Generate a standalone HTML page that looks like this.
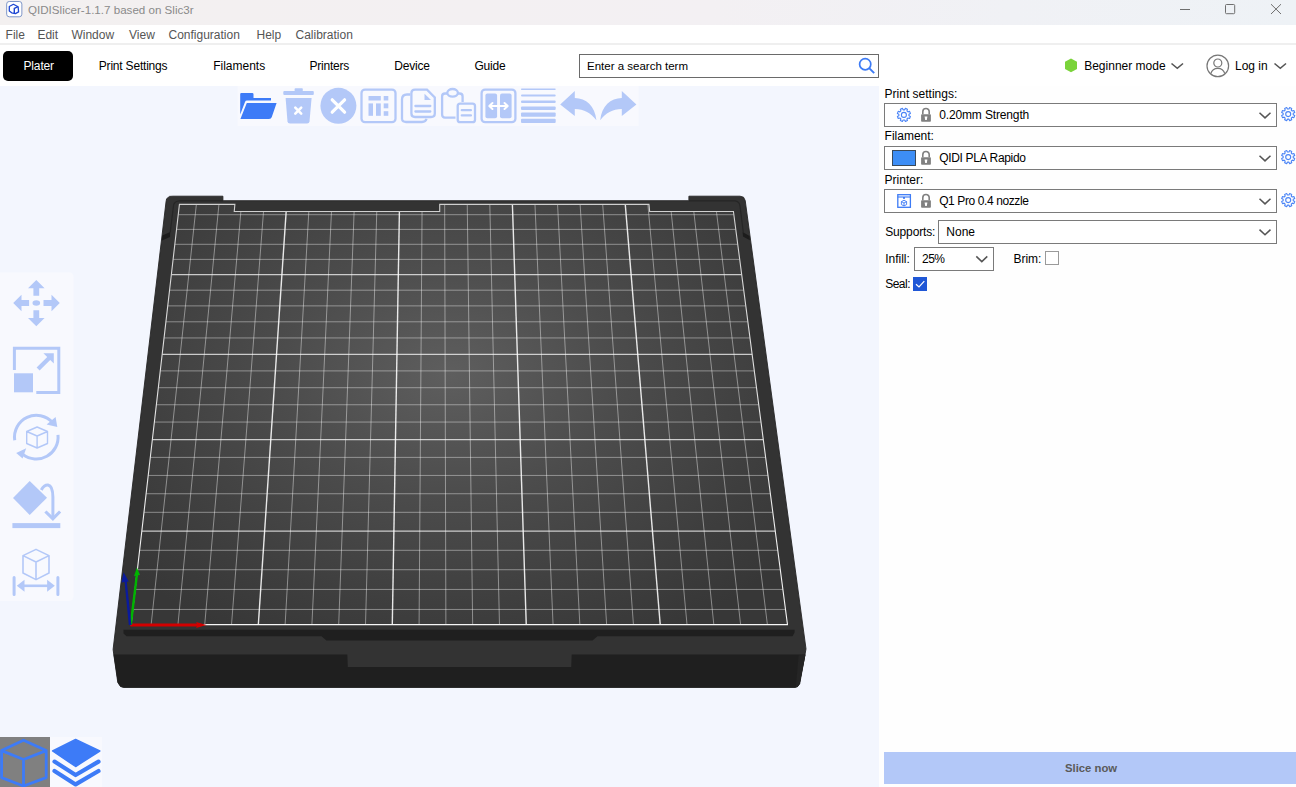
<!DOCTYPE html>
<html><head><meta charset="utf-8"><title>QIDISlicer</title>
<style>
*{box-sizing:border-box}
html,body{margin:0;padding:0}
body{width:1296px;height:787px;overflow:hidden;position:relative;background:#fff;font-family:"Liberation Sans",sans-serif;font-size:12px;color:#000}
.a{position:absolute;white-space:nowrap;line-height:12px}
#title{position:absolute;left:0;top:0;width:1296px;height:25px;background:linear-gradient(90deg,#f3f0f0 0%,#f3f0f3 55%,#f0f1f5 78%,#eef2f6 100%)}
#menu{position:absolute;left:0;top:25px;width:1296px;height:18px;background:#fff}
#sep{position:absolute;left:0;top:43px;width:1296px;height:2px;background:#efefef}
#tabs{position:absolute;left:0;top:45px;width:1296px;height:41px;background:#fff}
#canvas{position:absolute;left:0;top:86px;width:879px;height:701px;background:#f3f6fe;overflow:hidden}
#panel{position:absolute;left:879px;top:86px;width:417px;height:701px;background:#fefefe}
.menu{color:#555}
.combo{position:absolute;border:1px solid #7a7a7a;background:#fff}
.chev{position:absolute}
</style></head>
<body>
<div id="title">
  <svg class="a" style="left:6px;top:1px" width="17" height="17" viewBox="0 0 17 17">
    <rect x="0.66" y="0.5" width="15.2" height="15.3" rx="2.6" fill="#fff" stroke="#7f97c9" stroke-width="1"/>
    <path d="M7.4 3.3 L12.1 5.8 L12.6 10.9 L9.4 12.6 L5.7 11.8 L3.3 9.9 L3.3 5.5 Z" fill="none" stroke="#1d46d2" stroke-width="1.3" stroke-linejoin="round"/>
    <path d="M8.3 12.3 L8.3 7.5 L12 5.6" fill="none" stroke="#1d46d2" stroke-width="1.4"/>
  </svg>
  <div class="a" style="left:28px;top:4px;font-size:11.6px;color:#8a8a8a">QIDISlicer-1.1.7 based on Slic3r</div>
  <svg class="a" style="left:1170px;top:0" width="126" height="25">
    <line x1="10" y1="9.5" x2="20" y2="9.5" stroke="#6e6e6e" stroke-width="1"/>
    <rect x="55.5" y="4.5" width="9.2" height="9.2" rx="1" fill="none" stroke="#6e6e6e" stroke-width="1"/>
    <path d="M101 4.2 L111 14 M111 4.2 L101 14" stroke="#6e6e6e" stroke-width="1"/>
  </svg>
</div>
<div id="menu">
  <div class="a menu" style="left:5.6px;top:3.7px">File</div>
  <div class="a menu" style="left:37.4px;top:3.7px">Edit</div>
  <div class="a menu" style="left:71.4px;top:3.7px">Window</div>
  <div class="a menu" style="left:129px;top:3.7px">View</div>
  <div class="a menu" style="left:168.5px;top:3.7px">Configuration</div>
  <div class="a menu" style="left:256.5px;top:3.7px">Help</div>
  <div class="a menu" style="left:295.5px;top:3.7px">Calibration</div>
</div>
<div id="sep"></div>
<div id="tabs">
  <div style="position:absolute;left:3px;top:6px;width:70px;height:30px;background:#000;border-radius:5px"></div>
  <div class="a" style="left:23.5px;top:15px;font-size:12px;color:#fff;letter-spacing:-0.15px">Plater</div>
  <div class="a" style="left:98.8px;top:15px;font-size:12px;letter-spacing:-0.2px">Print Settings</div>
  <div class="a" style="left:213.2px;top:15px;font-size:12px">Filaments</div>
  <div class="a" style="left:309.4px;top:15px;font-size:12px;letter-spacing:-0.2px">Printers</div>
  <div class="a" style="left:394.3px;top:15px;font-size:12px;letter-spacing:-0.2px">Device</div>
  <div class="a" style="left:474.4px;top:15px;font-size:12px;letter-spacing:-0.2px">Guide</div>
  <div style="position:absolute;left:579px;top:9px;width:300px;height:24px;border:1px solid #6a6a6a;background:#fff"></div>
  <div class="a" style="left:587px;top:15.3px;font-size:11.5px">Enter a search term</div>
  <svg class="a" style="left:858px;top:12px" width="18" height="18" viewBox="0 0 18 18">
    <circle cx="7.2" cy="7.2" r="5.6" fill="none" stroke="#3d7bf5" stroke-width="1.7"/>
    <line x1="11.2" y1="11.2" x2="16.2" y2="16.2" stroke="#3d7bf5" stroke-width="1.9"/>
  </svg>
  <svg class="a" style="left:1064px;top:13px" width="14" height="15" viewBox="0 0 14 15">
    <polygon points="7,0.5 13,3.8 13,11 7,14.3 1,11 1,3.8" fill="#7ad33a"/>
  </svg>
  <div class="a" style="left:1084.2px;top:15px;font-size:12px">Beginner mode</div>
  <svg class="a" style="left:1170px;top:17px" width="15" height="8"><path d="M1.5 1.5 L7.3 6.3 L13 1.5" fill="none" stroke="#555" stroke-width="1.6"/></svg>
  <svg class="a" style="left:1206px;top:9px" width="24" height="24" viewBox="0 0 24 24">
    <circle cx="11.8" cy="11.9" r="10.8" fill="none" stroke="#777" stroke-width="1.2"/>
    <circle cx="11.8" cy="9" r="4" fill="none" stroke="#777" stroke-width="1.2"/>
    <path d="M4.8 19.6 C6 15.5 9 14.3 11.8 14.3 C14.6 14.3 17.6 15.5 18.8 19.6" fill="none" stroke="#777" stroke-width="1.2"/>
  </svg>
  <div class="a" style="left:1235px;top:15px;font-size:12px">Log in</div>
  <svg class="a" style="left:1273px;top:17px" width="15" height="8"><path d="M1.5 1.5 L7.3 6.3 L13 1.5" fill="none" stroke="#555" stroke-width="1.6"/></svg>
</div>

<div id="canvas">
</div>
<svg style="position:absolute;left:0;top:0" width="1296" height="787">
<polygon points="166.60,198.80 169.50,196.40 173.00,196.20 222.90,196.20 222.90,200.70 688.90,200.70 688.90,196.20 740.00,196.20 743.50,197.20 745.20,200.50 806.00,648.90 799.70,683.80 797.50,686.70 795.00,687.40 123.50,687.40 120.50,686.50 117.80,682.50 113.10,649.50 166.00,202.00" fill="#333333" stroke="#262626" stroke-width="0.9" stroke-linejoin="round"/>
<polygon points="113.50,654.60 347.30,654.60 347.80,667.00 571.20,667.00 571.70,654.60 805.50,654.60 799.70,683.80 797.50,686.70 795.00,687.40 123.50,687.40 120.50,686.50 117.80,682.50" fill="#1f1f1f"/>
<polygon points="798.6,655.2 805.4,654.8 799.7,683.8 797.5,686.7 795.8,687.2" fill="#252525"/>
<polygon points="123.50,629.80 794.60,629.80 794.60,632.50 792.50,636.20 597.50,636.20 592.50,640.60 326.40,640.60 321.50,636.20 126.50,636.20 123.50,633.50" fill="#1f1f1f"/>
<path d="M170.2 232.2 L173.6 205 Q174.3 201.2 179.5 200.8 L223 200.8 M688.9 200.8 L735 200.8 Q739.5 201.3 740 206 L743.3 232.3" fill="none" stroke="#262626" stroke-width="1.2"/>
<polygon points="162.4,235.6 170.2,232.0 170.0,236.9 162.0,240.5" fill="#1c1c1c"/>
<polygon points="742.6,232.0 749.5,236.0 749.9,240.3 743.0,236.6" fill="#1c1c1c"/>
<defs><radialGradient id="pg" cx="450" cy="375" r="420" gradientUnits="userSpaceOnUse" gradientTransform="translate(450 375) scale(1 0.72) translate(-450 -375)"><stop offset="0" stop-color="#5e5e5e"/><stop offset="0.4" stop-color="#4c4c4c"/><stop offset="0.78" stop-color="#3e3e3e"/><stop offset="1" stop-color="#373737"/></radialGradient></defs>
<polygon points="131.05,624.65 787.50,624.65 733.43,211.50 649.64,211.50 648.97,204.40 439.71,204.40 439.71,211.50 234.25,211.50 234.89,204.40 179.43,204.40" fill="url(#pg)"/>
<line x1="151.15" y1="624.65" x2="196.36" y2="204.40" stroke="#fff" stroke-opacity="0.42" stroke-width="1.0"/><line x1="177.94" y1="624.65" x2="218.93" y2="204.40" stroke="#fff" stroke-opacity="0.42" stroke-width="1.0"/><line x1="204.73" y1="624.65" x2="240.88" y2="211.50" stroke="#fff" stroke-opacity="0.42" stroke-width="1.0"/><line x1="231.53" y1="624.65" x2="263.53" y2="211.50" stroke="#fff" stroke-opacity="0.42" stroke-width="1.0"/><line x1="258.32" y1="624.65" x2="286.17" y2="211.50" stroke="#fff" stroke-opacity="0.88" stroke-width="1.4"/><line x1="285.12" y1="624.65" x2="308.82" y2="211.50" stroke="#fff" stroke-opacity="0.42" stroke-width="1.0"/><line x1="311.91" y1="624.65" x2="331.47" y2="211.50" stroke="#fff" stroke-opacity="0.42" stroke-width="1.0"/><line x1="338.70" y1="624.65" x2="354.11" y2="211.50" stroke="#fff" stroke-opacity="0.42" stroke-width="1.0"/><line x1="365.50" y1="624.65" x2="376.76" y2="211.50" stroke="#fff" stroke-opacity="0.42" stroke-width="1.0"/><line x1="392.29" y1="624.65" x2="399.40" y2="211.50" stroke="#fff" stroke-opacity="0.88" stroke-width="1.4"/><line x1="419.08" y1="624.65" x2="422.05" y2="211.50" stroke="#fff" stroke-opacity="0.42" stroke-width="1.0"/><line x1="445.88" y1="624.65" x2="444.67" y2="204.40" stroke="#fff" stroke-opacity="0.42" stroke-width="1.0"/><line x1="472.67" y1="624.65" x2="467.25" y2="204.40" stroke="#fff" stroke-opacity="0.42" stroke-width="1.0"/><line x1="499.47" y1="624.65" x2="489.82" y2="204.40" stroke="#fff" stroke-opacity="0.42" stroke-width="1.0"/><line x1="526.26" y1="624.65" x2="512.40" y2="204.40" stroke="#fff" stroke-opacity="0.88" stroke-width="1.4"/><line x1="553.05" y1="624.65" x2="534.97" y2="204.40" stroke="#fff" stroke-opacity="0.42" stroke-width="1.0"/><line x1="579.85" y1="624.65" x2="557.55" y2="204.40" stroke="#fff" stroke-opacity="0.42" stroke-width="1.0"/><line x1="606.64" y1="624.65" x2="580.12" y2="204.40" stroke="#fff" stroke-opacity="0.42" stroke-width="1.0"/><line x1="633.43" y1="624.65" x2="602.69" y2="204.40" stroke="#fff" stroke-opacity="0.42" stroke-width="1.0"/><line x1="660.23" y1="624.65" x2="625.27" y2="204.40" stroke="#fff" stroke-opacity="0.88" stroke-width="1.4"/><line x1="687.02" y1="624.65" x2="647.84" y2="204.40" stroke="#fff" stroke-opacity="0.42" stroke-width="1.0"/><line x1="713.82" y1="624.65" x2="671.15" y2="211.50" stroke="#fff" stroke-opacity="0.42" stroke-width="1.0"/><line x1="740.61" y1="624.65" x2="693.80" y2="211.50" stroke="#fff" stroke-opacity="0.42" stroke-width="1.0"/><line x1="767.40" y1="624.65" x2="716.44" y2="211.50" stroke="#fff" stroke-opacity="0.42" stroke-width="1.0"/><line x1="132.80" y1="609.44" x2="785.51" y2="609.44" stroke="#fff" stroke-opacity="0.4" stroke-width="1.0"/><line x1="135.11" y1="589.43" x2="782.89" y2="589.43" stroke="#fff" stroke-opacity="0.4" stroke-width="1.0"/><line x1="137.37" y1="569.72" x2="780.31" y2="569.72" stroke="#fff" stroke-opacity="0.4" stroke-width="1.0"/><line x1="139.61" y1="550.30" x2="777.77" y2="550.30" stroke="#fff" stroke-opacity="0.4" stroke-width="1.0"/><line x1="141.81" y1="531.17" x2="775.26" y2="531.17" stroke="#fff" stroke-opacity="0.72" stroke-width="1.3"/><line x1="143.98" y1="512.32" x2="772.80" y2="512.32" stroke="#fff" stroke-opacity="0.4" stroke-width="1.0"/><line x1="146.12" y1="493.74" x2="770.37" y2="493.74" stroke="#fff" stroke-opacity="0.4" stroke-width="1.0"/><line x1="148.23" y1="475.43" x2="767.97" y2="475.43" stroke="#fff" stroke-opacity="0.4" stroke-width="1.0"/><line x1="150.30" y1="457.39" x2="765.61" y2="457.39" stroke="#fff" stroke-opacity="0.4" stroke-width="1.0"/><line x1="152.35" y1="439.60" x2="763.28" y2="439.60" stroke="#fff" stroke-opacity="0.72" stroke-width="1.3"/><line x1="154.37" y1="422.06" x2="760.98" y2="422.06" stroke="#fff" stroke-opacity="0.4" stroke-width="1.0"/><line x1="156.36" y1="404.76" x2="758.72" y2="404.76" stroke="#fff" stroke-opacity="0.4" stroke-width="1.0"/><line x1="158.32" y1="387.71" x2="756.49" y2="387.71" stroke="#fff" stroke-opacity="0.4" stroke-width="1.0"/><line x1="160.26" y1="370.90" x2="754.29" y2="370.90" stroke="#fff" stroke-opacity="0.4" stroke-width="1.0"/><line x1="162.17" y1="354.31" x2="752.12" y2="354.31" stroke="#fff" stroke-opacity="0.72" stroke-width="1.3"/><line x1="164.05" y1="337.95" x2="749.98" y2="337.95" stroke="#fff" stroke-opacity="0.4" stroke-width="1.0"/><line x1="165.91" y1="321.81" x2="747.86" y2="321.81" stroke="#fff" stroke-opacity="0.4" stroke-width="1.0"/><line x1="167.74" y1="305.89" x2="745.78" y2="305.89" stroke="#fff" stroke-opacity="0.4" stroke-width="1.0"/><line x1="169.55" y1="290.19" x2="743.72" y2="290.19" stroke="#fff" stroke-opacity="0.4" stroke-width="1.0"/><line x1="171.33" y1="274.69" x2="741.70" y2="274.69" stroke="#fff" stroke-opacity="0.72" stroke-width="1.3"/><line x1="173.10" y1="259.39" x2="739.69" y2="259.39" stroke="#fff" stroke-opacity="0.4" stroke-width="1.0"/><line x1="174.83" y1="244.30" x2="737.72" y2="244.30" stroke="#fff" stroke-opacity="0.4" stroke-width="1.0"/><line x1="176.55" y1="229.40" x2="735.77" y2="229.40" stroke="#fff" stroke-opacity="0.4" stroke-width="1.0"/><line x1="178.24" y1="214.70" x2="733.84" y2="214.70" stroke="#fff" stroke-opacity="0.4" stroke-width="1.0"/>
<defs><linearGradient id="bg1" x1="0" y1="204" x2="0" y2="625" gradientUnits="userSpaceOnUse"><stop offset="0" stop-color="#cfcfcf"/><stop offset="1" stop-color="#f6f6f6"/></linearGradient></defs>
<polygon points="131.05,624.65 787.50,624.65 733.43,211.50 649.64,211.50 648.97,204.40 439.71,204.40 439.71,211.50 234.25,211.50 234.89,204.40 179.43,204.40" fill="none" stroke="url(#bg1)" stroke-width="1.1"/>
<path d="M130.4 623.6 L197 623.6 L196 622.0 L206.6 625.0 L196 628.0 L197 626.4 L130.4 626.4 Z" fill="#d20000"/>
<path d="M129.5 625.0 L135.6 575.8 L134.0 576.2 L136.9 567.4 L140.0 575.0 L138.0 575.3 L132.0 625.0 Z" fill="#00b400"/>
<path d="M128.8 625.0 L124.6 582.0 L121.5 582.6 L123.6 572.3 L128.8 581.6 L126.8 581.8 L131.4 625.0 Z" fill="#0a1a9c"/>
</svg>
<svg style="position:absolute;left:0;top:0" width="1296" height="787">
<!-- top toolbar panel -->
<rect x="237.6" y="86" width="401" height="40" fill="#f8f9fe"/>
<g fill="#3d7bf7">
  <path d="M240.2 94.2 Q240.2 93.1 241.3 93.1 L252.3 93.1 Q253.5 93.1 253.5 94.3 L253.5 97.9 L271 97.9 L271 100.6 L247 100.6 Q245.5 100.6 245 102 L240.2 114.5 Z"/>
  <path d="M246.8 102.9 L276.6 102.9 L271.8 117 Q271.2 119 269 119 L240.4 119 Z"/>
</g>
<g fill="#b3c8f8">
  <rect x="294.6" y="88.2" width="8.2" height="3.2" rx="0.8"/>
  <rect x="283.3" y="90.9" width="30.5" height="4.2" rx="1"/>
  <path d="M285.6 97.9 L311.6 97.9 L309.5 121.5 Q309.3 123.6 307 123.6 L290 123.6 Q287.7 123.6 287.5 121.5 Z"/>
  <circle cx="338.4" cy="105.8" r="18"/>
</g>
<g stroke="#fff" stroke-width="2.6" stroke-linecap="round" fill="none">
  <path d="M295.3 107.7 L301.2 113.6 M301.2 107.7 L295.3 113.6"/>
  <path d="M332.2 99.8 L344.6 112.2 M344.6 99.8 L332.2 112.2" stroke-width="3.2"/>
</g>
<g fill="none" stroke="#b3c8f8" stroke-width="2.3">
  <rect x="361.5" y="89.6" width="34" height="32.6" rx="3.5"/>
  <path d="M402 119.5 L402 99.5 Q402 94.5 407 94.5 L410.3 94.5 M426.5 118.8 Q425.8 122 422 122 L406 122 Q402.8 122 402 119.5"/>
  <path d="M411.4 93 Q411.4 89.6 415 89.6 L427 89.6 L434.8 97.5 L434.8 113.5 Q434.8 117 431 117 L415 117 Q411.4 117 411.4 113.5 Z"/>
  <path d="M415.4 106 L430.3 106 M415.4 111.5 L430.3 111.5" stroke-linecap="round"/>
  <path d="M455.5 117.6 L445 117.6 Q442.1 117.6 442.1 114.6 L442.1 96.5 Q442.1 93.5 445 93.5 L447.5 93.5 M458 93.5 L459.6 93.5 Q462.6 93.5 462.6 96.5 L462.6 102"/>
  <ellipse cx="452.6" cy="92.8" rx="5.3" ry="3.8"/>
  <rect x="457.7" y="103.6" width="17.3" height="18.6" rx="2.5"/>
  <path d="M461.8 110.2 L470.9 110.2 M461.8 115.4 L470.9 115.4" stroke-linecap="round"/>
  <rect x="481.6" y="89.6" width="33.8" height="32.6" rx="3.5"/>
</g>
<g fill="#b3c8f8">
  <rect x="368.5" y="96" width="12.3" height="4.5"/>
  <rect x="383.7" y="96" width="4.6" height="4.5"/>
  <rect x="368.5" y="103.4" width="4.5" height="12.4"/>
  <rect x="376" y="103.4" width="4.8" height="12.4"/>
  <rect x="383.7" y="103.4" width="4.6" height="4.9"/>
  <rect x="383.7" y="111.2" width="4.6" height="4.6"/>
  <path d="M424.5 93.7 L431 99.9 L424.5 99.9 Z"/>
  <rect x="485.4" y="93.4" width="11.7" height="24.9" rx="2"/>
  <rect x="500" y="93.4" width="11.6" height="24.9" rx="2"/>
  <rect x="521" y="88.4" width="34.7" height="1.5" rx="0.7"/>
  <rect x="521" y="94.4" width="34.7" height="2.2" rx="1"/>
  <rect x="521" y="100.5" width="34.7" height="2.6" rx="1"/>
  <rect x="521" y="106.4" width="34.7" height="3.5" rx="1"/>
  <rect x="521" y="112.5" width="34.7" height="4.2" rx="1"/>
  <rect x="521" y="118.7" width="34.7" height="4.2" rx="1"/>
  <path d="M560.2 104.4 L574.8 91.1 L574.8 97.9 C586 97.9 595 106 596.4 120.2 C591 113 584 109 574.8 109 L574.8 116.1 Z"/>
  <path d="M636.4 104.4 L621.8 91.1 L621.8 97.9 C610.6 97.9 601.6 106 600.2 120.2 C605.6 113 612.6 109 621.8 109 L621.8 116.1 Z"/>
</g>
<path d="M489.5 106 L507.5 106 M492.5 103 L489.3 106 L492.5 109 M504.5 103 L507.7 106 L504.5 109" fill="none" stroke="#fff" stroke-width="2" stroke-linecap="round" stroke-linejoin="round"/>

<!-- left toolbar panel -->
<path d="M0 272.3 L68.5 272.3 Q73.6 272.3 73.6 277.4 L73.6 596 Q73.6 601 68.5 601 L0 601 Z" fill="#f8f9fe"/>
<g fill="#b3c8f8">
  <path d="M36.3 279.9 L44.6 288.2 L39.2 288.2 L39.2 295.8 L33.4 295.8 L33.4 288.2 L28 288.2 Z"/>
  <path d="M36.3 326.2 L44.6 317.9 L39.2 317.9 L39.2 310.3 L33.4 310.3 L33.4 317.9 L28 317.9 Z"/>
  <path d="M13.2 303 L21.5 294.7 L21.5 300.1 L29.1 300.1 L29.1 305.9 L21.5 305.9 L21.5 311.3 Z"/>
  <path d="M59.8 303 L51.5 294.7 L51.5 300.1 L43.5 300.1 L43.5 305.9 L51.5 305.9 L51.5 311.3 Z"/>
  <ellipse cx="36.3" cy="303" rx="3.8" ry="2.8"/>
  <rect x="14" y="373.3" width="19" height="19"/>
  <path d="M53.8 353.2 L53.8 363.6 L50.2 360 L39.6 370.6 L36.6 367.6 L47.2 357 L43.4 353.2 Z"/>
  <path d="M29.7 481 L47 497.8 L29.7 514.9 L13 498 Z"/>
  <rect x="12.4" y="523.1" width="47.9" height="5" />
  <path d="M44.3 512.6 L52.9 521 L61.2 512.6 L59 510.4 L52.9 516.5 L46.5 510.4 Z"/>
  <path d="M16.2 452.9 L26.2 448.2 L22.6 458.4 Z"/>
  <path d="M46.6 424.4 L55.6 416.9 L57.3 427.0 Z"/>
  <path d="M16.8 585.8 L24.5 579.8 L24.5 591.8 Z"/>
  <path d="M54.8 585.8 L47.1 579.8 L47.1 591.8 Z"/>
</g>
<g fill="none" stroke="#b3c8f8" stroke-width="3">
  <path d="M14.4 370 L14.4 348.3 L58.8 348.3 L58.8 392.4 L36.3 392.4"/>
  <path d="M41.3 490 Q44 484.8 48 485 Q52.8 485.8 52.9 497 L52.9 517"/>
  <path d="M14.71 440.23 A21.8 21.8 0 0 1 52.50 422.61"/>
  <path d="M57.98 434.92 A21.8 21.8 0 0 1 22.88 454.38"/>
  <path d="M14.1 577.6 L14.1 594.4 M57.9 577.6 L57.9 594.4" stroke-linecap="round"/>
  <path d="M22 585.8 L50 585.8" stroke-width="2.6"/>
</g>
<g fill="none" stroke="#b3c8f8" stroke-width="1.4" stroke-linejoin="round">
  <path d="M37.1 427 L47.5 431.5 L47.5 443.5 L37.1 448 L26.7 443.5 L26.7 431.5 Z M26.7 431.5 L37.1 436 L47.5 431.5 M37.1 436 L37.1 448"/>
  <path d="M36 549.4 L49 555.6 L49 573 L36 579.6 L23 573 L23 555.6 Z M23 555.6 L36 562 L49 555.6 M36 562 L36 579.6" stroke-width="1.6"/>
</g>

<!-- bottom-left view buttons -->
<rect x="0" y="737" width="50" height="50" fill="#808080"/>
<path d="M23.5 740.2 L46.2 750.6 L46.2 777.6 L23.5 786 L1.6 777.6 L1.6 750.6 Z M1.6 750.6 L23.5 759.5 L46.2 750.6 M23.5 759.5 L23.5 786" fill="none" stroke="#3d7bf7" stroke-width="2.8" stroke-linejoin="round"/>
<rect x="50" y="737" width="52" height="50" fill="#f8f9fe"/>
<path d="M75.6 739.4 L99.8 751 L75.6 766.5 L52.6 751 Z" fill="#3d7bf7" stroke="#3d7bf7" stroke-width="1.5" stroke-linejoin="round"/>
<path d="M54.5 761.6 L75.6 775 L98.5 761.6 M54.5 771 L75.6 784.4 L98.5 771" fill="none" stroke="#3d7bf7" stroke-width="4.2" stroke-linecap="round" stroke-linejoin="round"/>

</svg>

<div id="panel">
  <div class="a" style="left:5.6px;top:1.8px">Print settings:</div>
  <div class="combo" style="left:5px;top:17px;width:393px;height:24px"></div>
  <div class="a" style="left:60.2px;top:22.8px;letter-spacing:-0.14px">0.20mm Strength</div>
  <div class="a" style="left:5.6px;top:44.4px">Filament:</div>
  <div class="combo" style="left:5px;top:60px;width:393px;height:24px"></div>
  <div style="position:absolute;left:13px;top:64px;width:24px;height:16px;background:#3d8ef6;border:1px solid #3a4a5a"></div>
  <div class="a" style="left:60.2px;top:65.9px;letter-spacing:-0.33px">QIDI PLA Rapido</div>
  <div class="a" style="left:5.6px;top:87.8px">Printer:</div>
  <div class="combo" style="left:5px;top:103px;width:393px;height:24px"></div>
  <div class="a" style="left:60.2px;top:109px;letter-spacing:-0.4px">Q1 Pro 0.4 nozzle</div>
  <div class="a" style="left:6.2px;top:139.8px;letter-spacing:-0.14px">Supports:</div>
  <div class="combo" style="left:59px;top:134px;width:339px;height:24px"></div>
  <div class="a" style="left:67.3px;top:139.8px">None</div>
  <div class="a" style="left:6.2px;top:166.6px">Infill:</div>
  <div class="combo" style="left:35px;top:161px;width:80px;height:24px"></div>
  <div class="a" style="left:43px;top:166.6px;letter-spacing:-0.5px">25%</div>
  <div class="a" style="left:134.4px;top:166.6px">Brim:</div>
  <div style="position:absolute;left:166px;top:165px;width:14px;height:14px;border:1px solid #9a9a9a;background:#fff"></div>
  <div class="a" style="left:6.2px;top:191.8px;letter-spacing:-0.5px">Seal:</div>
  <div style="position:absolute;left:34px;top:191px;width:14px;height:14px;background:#1f57d6"></div>
  <svg class="a" style="left:34px;top:191px" width="14" height="14"><path d="M3 7.2 L6 10 L11.3 4.2" fill="none" stroke="#fff" stroke-width="1.2"/></svg>
  <div style="position:absolute;left:5px;top:666px;width:412px;height:32px;background:#b3c8f8"></div>
  <div class="a" style="left:186px;top:676px;font-size:12px;color:#5a5a5a;font-weight:bold;font-size:11.3px">Slice now</div>
</div>
<svg style="position:absolute;left:0;top:0" width="1296" height="787">
<path d="M905.41 108.37 L907.45 109.21 L906.93 110.80 L908.00 111.87 L909.59 111.35 L910.43 113.39 L908.94 114.14 L908.94 115.66 L910.43 116.41 L909.59 118.45 L908.00 117.93 L906.93 119.00 L907.45 120.59 L905.41 121.43 L904.66 119.94 L903.14 119.94 L902.39 121.43 L900.35 120.59 L900.87 119.00 L899.80 117.93 L898.21 118.45 L897.37 116.41 L898.86 115.66 L898.86 114.14 L897.37 113.39 L898.21 111.35 L899.80 111.87 L900.87 110.80 L900.35 109.21 L902.39 108.37 L903.14 109.86 L904.66 109.86Z" fill="none" stroke="#4a84f6" stroke-width="1.1" stroke-linejoin="round"/><circle cx="903.9" cy="114.9" r="2.5" fill="none" stroke="#4a84f6" stroke-width="1.1"/>
<path d="M1289.71 107.57 L1291.75 108.41 L1291.23 110.00 L1292.30 111.07 L1293.89 110.55 L1294.73 112.59 L1293.24 113.34 L1293.24 114.86 L1294.73 115.61 L1293.89 117.65 L1292.30 117.13 L1291.23 118.20 L1291.75 119.79 L1289.71 120.63 L1288.96 119.14 L1287.44 119.14 L1286.69 120.63 L1284.65 119.79 L1285.17 118.20 L1284.10 117.13 L1282.51 117.65 L1281.67 115.61 L1283.16 114.86 L1283.16 113.34 L1281.67 112.59 L1282.51 110.55 L1284.10 111.07 L1285.17 110.00 L1284.65 108.41 L1286.69 107.57 L1287.44 109.06 L1288.96 109.06Z" fill="none" stroke="#4a84f6" stroke-width="1.1" stroke-linejoin="round"/><circle cx="1288.2" cy="114.10000000000001" r="2.5" fill="none" stroke="#4a84f6" stroke-width="1.1"/>
<path d="M922.8 114.2 L922.8 111.7 A3.2 3.2 0 0 1 929.2 111.7 L929.2 114.2" fill="none" stroke="#808080" stroke-width="1.6"/><rect x="921.10" y="114.20" width="9.8" height="7.6" rx="0.8" fill="#808080"/><path d="M924.60 116.40 L927.40 116.40 L926.80 120.00 L925.20 120.00 Z" fill="#fff"/>
<path d="M1259.5 112.7 L1265.0 117.9 L1270.5 112.7" fill="none" stroke="#555" stroke-width="1.5"/>
<path d="M1289.71 150.57 L1291.75 151.41 L1291.23 153.00 L1292.30 154.07 L1293.89 153.55 L1294.73 155.59 L1293.24 156.34 L1293.24 157.86 L1294.73 158.61 L1293.89 160.65 L1292.30 160.13 L1291.23 161.20 L1291.75 162.79 L1289.71 163.63 L1288.96 162.14 L1287.44 162.14 L1286.69 163.63 L1284.65 162.79 L1285.17 161.20 L1284.10 160.13 L1282.51 160.65 L1281.67 158.61 L1283.16 157.86 L1283.16 156.34 L1281.67 155.59 L1282.51 153.55 L1284.10 154.07 L1285.17 153.00 L1284.65 151.41 L1286.69 150.57 L1287.44 152.06 L1288.96 152.06Z" fill="none" stroke="#4a84f6" stroke-width="1.1" stroke-linejoin="round"/><circle cx="1288.2" cy="157.1" r="2.5" fill="none" stroke="#4a84f6" stroke-width="1.1"/>
<path d="M922.8 157.2 L922.8 154.7 A3.2 3.2 0 0 1 929.2 154.7 L929.2 157.2" fill="none" stroke="#808080" stroke-width="1.6"/><rect x="921.10" y="157.20" width="9.8" height="7.6" rx="0.8" fill="#808080"/><path d="M924.60 159.40 L927.40 159.40 L926.80 163.00 L925.20 163.00 Z" fill="#fff"/>
<path d="M1259.5 155.70000000000002 L1265.0 160.9 L1270.5 155.70000000000002" fill="none" stroke="#555" stroke-width="1.5"/>
<path d="M1289.71 193.57 L1291.75 194.41 L1291.23 196.00 L1292.30 197.07 L1293.89 196.55 L1294.73 198.59 L1293.24 199.34 L1293.24 200.86 L1294.73 201.61 L1293.89 203.65 L1292.30 203.13 L1291.23 204.20 L1291.75 205.79 L1289.71 206.63 L1288.96 205.14 L1287.44 205.14 L1286.69 206.63 L1284.65 205.79 L1285.17 204.20 L1284.10 203.13 L1282.51 203.65 L1281.67 201.61 L1283.16 200.86 L1283.16 199.34 L1281.67 198.59 L1282.51 196.55 L1284.10 197.07 L1285.17 196.00 L1284.65 194.41 L1286.69 193.57 L1287.44 195.06 L1288.96 195.06Z" fill="none" stroke="#4a84f6" stroke-width="1.1" stroke-linejoin="round"/><circle cx="1288.2" cy="200.1" r="2.5" fill="none" stroke="#4a84f6" stroke-width="1.1"/>
<path d="M922.8 200.2 L922.8 197.7 A3.2 3.2 0 0 1 929.2 197.7 L929.2 200.2" fill="none" stroke="#808080" stroke-width="1.6"/><rect x="921.10" y="200.20" width="9.8" height="7.6" rx="0.8" fill="#808080"/><path d="M924.60 202.40 L927.40 202.40 L926.80 206.00 L925.20 206.00 Z" fill="#fff"/>
<path d="M1259.5 198.70000000000002 L1265.0 203.9 L1270.5 198.70000000000002" fill="none" stroke="#555" stroke-width="1.5"/>
<path d="M1259.5 229.6 L1265.0 234.79999999999998 L1270.5 229.6" fill="none" stroke="#555" stroke-width="1.5"/>
<path d="M976.3 256.4 L981.8 261.59999999999997 L987.3 256.4" fill="none" stroke="#555" stroke-width="1.5"/>
<rect x="897.8" y="194.7" width="12.6" height="12.6" fill="none" stroke="#3d7bf5" stroke-width="1.3"/><line x1="897.8" y1="197" x2="910.4" y2="197" stroke="#3d7bf5" stroke-width="1.1"/><rect x="903" y="197" width="2" height="1.8" fill="#3d7bf5"/><path d="M904 200.3 L906.6 201.6 L906.6 204.6 L904 205.9 L901.4 204.6 L901.4 201.6 Z M901.4 201.6 L904 203 L906.6 201.6 M904 203 L904 205.9" fill="none" stroke="#3d7bf5" stroke-width="0.9"/>
</svg>
</body></html>
